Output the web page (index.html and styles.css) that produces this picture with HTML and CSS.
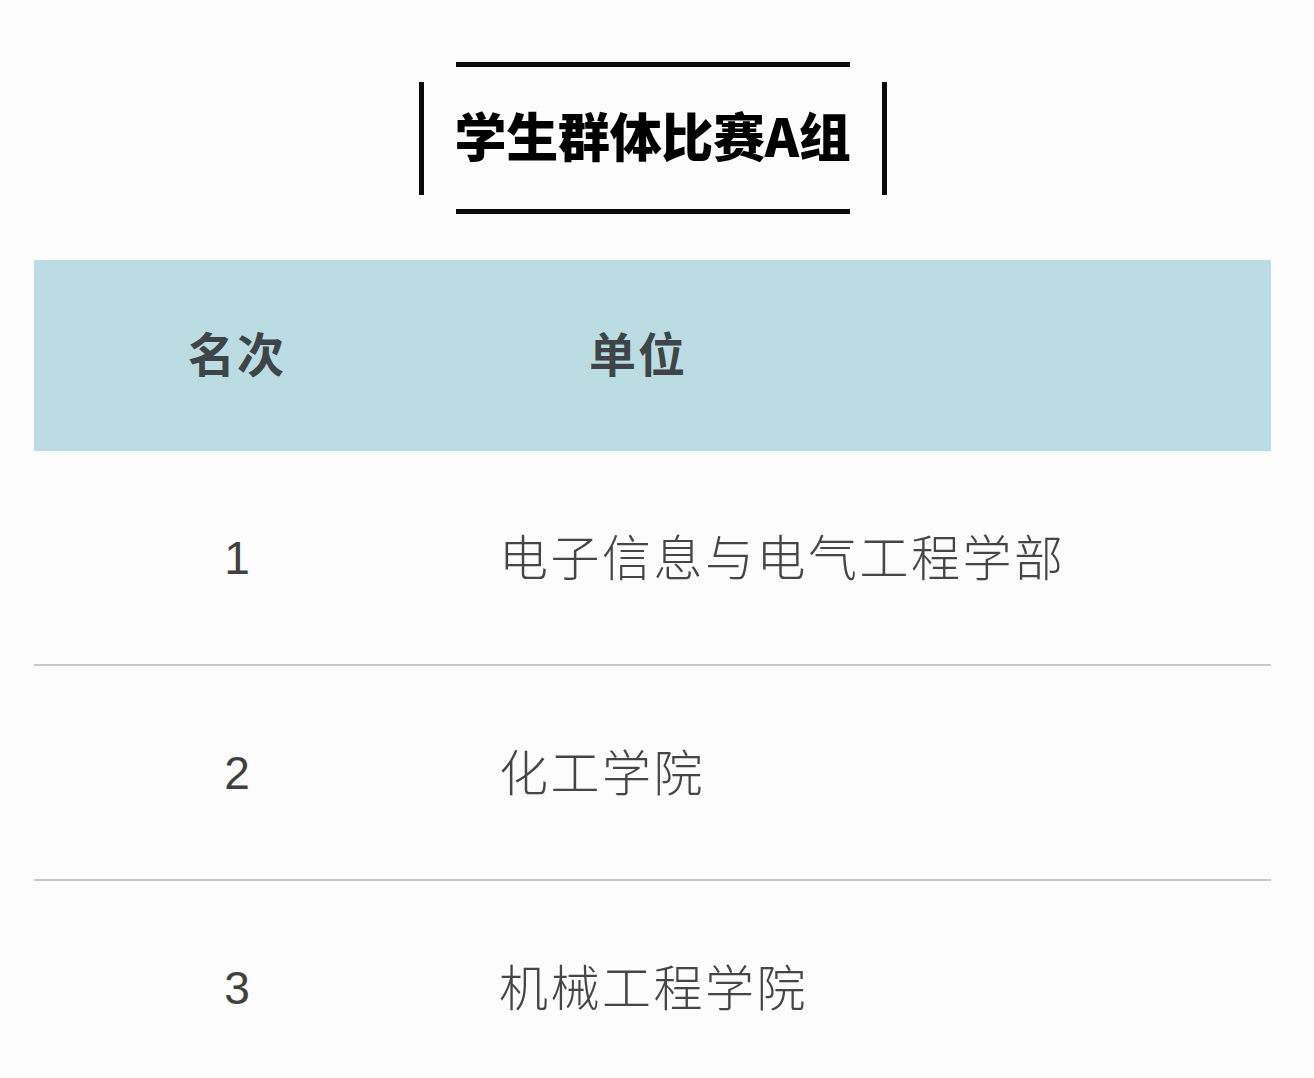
FILE: index.html
```html
<!DOCTYPE html>
<html lang="zh">
<head>
<meta charset="utf-8">
<link rel="stylesheet" href="styles.css">
</head>
<body>
<div class="page">
  <div class="title-wrap">
    <div class="title-box">
      <span class="bar"></span>
      <div class="title-inner">
        <span class="hline"></span>
        <h1 class="title">学生群体比赛A组</h1>
        <span class="hline"></span>
      </div>
      <span class="bar"></span>
    </div>
  </div>
  <div class="table">
    <div class="row head">
      <div class="c-rank">名次</div>
      <div class="c-unit">单位</div>
    </div>
    <div class="row">
      <div class="c-rank num">1</div>
      <div class="c-unit">电子信息与电气工程学部</div>
    </div>
    <div class="row">
      <div class="c-rank num">2</div>
      <div class="c-unit">化工学院</div>
    </div>
    <div class="row last">
      <div class="c-rank num">3</div>
      <div class="c-unit">机械工程学院</div>
    </div>
  </div>
</div>
</body>
</html>
```
FILE: styles.css
```css
html, body {
  margin: 0;
  padding: 0;
  background: #fcfcfc;
}
body {
  font-family: "Noto Sans CJK SC", "Noto Sans", sans-serif;
  height: 1078px;
  overflow: hidden;
}
.page {
  width: 1237px;
  padding-left: 34px;
  padding-top: 62px;
}
.title-wrap {
  display: flex;
  justify-content: center;
}
.title-box {
  display: flex;
  align-items: center;
  gap: 32px;
}
.bar {
  display: block;
  width: 5px;
  height: 113px;
  background: #0a0a0a;
}
.title-inner {
  display: flex;
  flex-direction: column;
  align-items: center;
  width: 394px;
}
.hline {
  display: block;
  width: 394px;
  height: 5px;
  background: #0a0a0a;
}
.title {
  margin: 39px 0 45px;
  font-size: 52px;
  line-height: 58px;
  font-weight: 900;
  color: #000;
  letter-spacing: -0.3px;
  white-space: nowrap;
}
.table {
  margin-top: 46px;
}
.row {
  display: grid;
  grid-template-columns: 406px 1fr;
  align-items: center;
  height: 213px;
  border-bottom: 2px solid #c9c9c9;
}
.row.head {
  height: 191px;
  background: #bcdce4;
  border-bottom: none;
}
.row.last {
  border-bottom: none;
}
.c-rank {
  text-align: center;
  font-size: 47px;
  color: #3f3f3f;
}
.c-unit {
  padding-left: 59px;
  padding-bottom: 7px;
  font-size: 49px;
  color: #454545;
  font-weight: 300;
  letter-spacing: 2.5px;
}
.head .c-rank,
.head .c-unit {
  font-weight: 700;
  font-size: 47px;
  color: #3e4549;
  letter-spacing: 2px;
  padding-bottom: 8px;
}
.head .c-unit {
  padding-left: 149px;
}
.num {
  font-family: "Liberation Sans", Arial, sans-serif;
  font-size: 46px;
  color: #404040;
}
```
